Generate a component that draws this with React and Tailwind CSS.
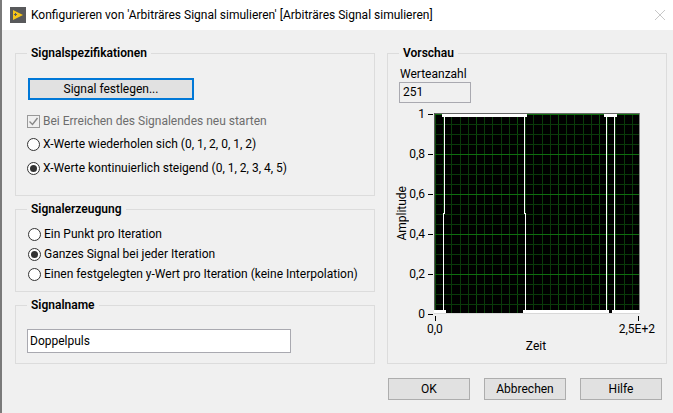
const xMinor = Array.from({ length: 25 }, (_, i) => i);
const yMinor = Array.from({ length: 20 }, (_, i) => i);

function Group({ title, className, children }) {
    return (
        <fieldset className={`border border-[#dcdcdc] px-[11px] ${className}`}>
            <legend className="px-1 text-[12px] leading-[16px] font-semibold text-black">{title}</legend>
            {children}
        </fieldset>
    );
}

function Radio({ label, checked }) {
    return (
        <div className="flex items-center gap-[3px] h-[20px] text-[12px] text-black">
            <span className="flex items-center justify-center w-[13px] h-[13px] rounded-full border border-[#333] bg-white shrink-0">
                {checked && <span className="w-[7px] h-[7px] rounded-full bg-[#333]"></span>}
            </span>
            <span className="whitespace-nowrap">{label}</span>
        </div>
    );
}

function DialogButton({ children }) {
    return (
        <button className="w-[82px] h-[22px] bg-[#e1e1e1] border border-[#adadad] text-[12px] text-black">
            {children}
        </button>
    );
}

function Plot() {
    return (
        <svg width="206" height="201" viewBox="0 0 206 201" className="block shrink-0">
            <rect x="0" y="0" width="206" height="201" fill="#000" />
            {xMinor.map((i) => (
                <rect key={i} x={Math.round(i * 8.2) + 1} y="0" width="1" height="201" fill={i % 5 === 0 ? '#0b4a0b' : '#0a3a0a'} />
            ))}
            {yMinor.map((i) => (
                <rect key={i} x="0" y={i * 10 + 1} width="206" height="1" fill={i % 4 === 0 ? '#0f6e0f' : '#0a3a0a'} />
            ))}
            <rect x="0" y="0" width="206" height="1" fill="#666" />
            <rect x="0" y="0" width="1" height="201" fill="#555" />
            <rect x="205" y="0" width="1" height="201" fill="#888" />
            {/* first pulse */}
            <rect x="8" y="1" width="85" height="3" fill="#fff" />
            <rect x="10" y="1" width="1" height="100" fill="#fff" />
            <rect x="90" y="1" width="1" height="100" fill="#fff" />
            <rect x="9" y="100" width="1" height="100" fill="#fff" />
            <rect x="91" y="100" width="1" height="100" fill="#fff" />
            {/* second pulse */}
            <rect x="170" y="1" width="13" height="3" fill="#fff" />
            <rect x="172" y="1" width="1" height="198" fill="#fff" />
            <rect x="180" y="1" width="1" height="198" fill="#fff" />
            {/* low parts */}
            <rect x="0" y="197" width="12" height="3" fill="#fff" />
            <rect x="89" y="197" width="86" height="3" fill="#fff" />
            <rect x="178" y="197" width="28" height="3" fill="#fff" />
            <rect x="0" y="200" width="206" height="1" fill="#d8d8d8" />
        </svg>
    );
}

function YTick({ label }) {
    return (
        <div className="flex items-center justify-end gap-[3px] h-0 text-[12px] text-black">
            <span>{label}</span>
            <span className="w-[5px] h-px bg-black"></span>
        </div>
    );
}

export default function App() {
    return (
        <div className="w-[673px] h-[413px] bg-[#f0f0f0] border-l-2 border-[#7a7a7a] overflow-hidden font-['Roboto',sans-serif]">
            {/* title bar */}
            <div className="flex items-center h-[30px] bg-white pl-[8px] pr-[8px]">
                <svg width="16" height="16" viewBox="0 0 16 16" className="shrink-0">
                    <rect width="16" height="16" fill="#58595b" />
                    <path d="M3 3 L13 8 L3 13 Z" fill="#f5c518" />
                    <rect x="4" y="7" width="3" height="1" fill="#58595b" />
                    <rect x="5" y="6" width="1" height="3" fill="#58595b" />
                </svg>
                <span className="ml-[5px] text-[12px] text-black whitespace-nowrap">
                    Konfigurieren von 'Arbiträres Signal simulieren' [Arbiträres Signal simulieren]
                </span>
                <svg width="10" height="10" viewBox="0 0 10 10" className="ml-auto">
                    <path d="M0 0 L10 10 M10 0 L0 10" stroke="#c8c8c8" fill="none" />
                </svg>
            </div>

            <div className="flex gap-[12px] pl-[13px] pt-[15px]">
                {/* left column */}
                <div className="flex flex-col w-[360px]">
                    <Group title="Signalspezifikationen" className="h-[151px]">
                        <button className="block mt-[17px] ml-[1px] w-[166px] h-[22px] bg-[#e1e1e1] border-2 border-[#0078d7] text-[12px] text-black">
                            Signal festlegen...
                        </button>
                        <div className="flex items-center gap-[3px] mt-[11px] h-[20px] text-[12px] text-[#6d6d6d]">
                            <span className="flex items-center justify-center w-[13px] h-[13px] border border-[#999] shrink-0">
                                <svg width="11" height="11" viewBox="0 0 11 11">
                                    <path d="M1.5 5.5 L4.5 8.5 L9.5 2" stroke="#888" strokeWidth="1.4" fill="none" />
                                </svg>
                            </span>
                            <span className="whitespace-nowrap">Bei Erreichen des Signalendes neu starten</span>
                        </div>
                        <div className="mt-[3px]">
                            <Radio label="X-Werte wiederholen sich (0, 1, 2, 0, 1, 2)" />
                        </div>
                        <div className="mt-[4px]">
                            <Radio label="X-Werte kontinuierlich steigend (0, 1, 2, 3, 4, 5)" checked />
                        </div>
                    </Group>

                    <Group title="Signalerzeugung" className="h-[91px] mt-[5px]">
                        <div className="mt-[7px] ml-[1px]">
                            <Radio label="Ein Punkt pro Iteration" />
                            <Radio label="Ganzes Signal bei jeder Iteration" checked />
                            <Radio label="Einen festgelegten y-Wert pro Iteration (keine Interpolation)" />
                        </div>
                    </Group>

                    <Group title="Signalname" className="h-[67px] mt-[5px]">
                        <input
                            readOnly
                            value="Doppelpuls"
                            className="block mt-[16px] w-[264px] h-[24px] bg-white border border-[#a9a9b0] px-[2px] text-[12px] text-black"
                        />
                    </Group>
                </div>

                {/* right column */}
                <div className="flex flex-col w-[276px]">
                    <Group title="Vorschau" className="h-[319px]">
                        <div className="text-[12px] leading-[16px] text-black mt-[5px] ml-[1px]">Werteanzahl</div>
                        <div className="w-[72px] h-[21px] border border-[#a9a9b0] px-[3px] text-[12px] leading-[19px] text-black">251</div>
                        <div className="flex mt-[10px]">
                            <div className="relative w-[35px] h-[201px] shrink-0 pr-px">
                                <div className="absolute -left-[4px] top-0 h-full flex items-center justify-center">
                                    <span className="[writing-mode:vertical-rl] rotate-180 text-[12px] leading-[14px] text-black">Amplitude</span>
                                </div>
                                <div className="flex flex-col items-end pt-[1px]">
                                    <div className="h-[40px]"><YTick label="1" /></div>
                                    <div className="h-[40px]"><YTick label="0,8" /></div>
                                    <div className="h-[40px]"><YTick label="0,6" /></div>
                                    <div className="h-[40px]"><YTick label="0,4" /></div>
                                    <div className="h-[40px]"><YTick label="0,2" /></div>
                                    <div className="h-0"><YTick label="0" /></div>
                                </div>
                            </div>
                            <Plot />
                        </div>
                        <div className="flex justify-between ml-[36px] w-[204px] mt-[2px] h-[5px]">
                            <span className="w-px h-[5px] bg-black"></span>
                            <span className="w-px h-[5px] bg-black"></span>
                        </div>
                        <div className="flex justify-between ml-[28px] w-[228px] text-[12px] leading-[14px] text-black mt-px">
                            <span>0,0</span>
                            <span>2,5E+2</span>
                        </div>
                        <div className="text-center text-[12px] leading-[16px] text-black ml-[35px] w-[204px] mt-[2px]">Zeit</div>
                    </Group>
                    <div className="flex gap-[14px] mt-[14px] pl-[1px]">
                        <DialogButton>OK</DialogButton>
                        <DialogButton>Abbrechen</DialogButton>
                        <DialogButton>Hilfe</DialogButton>
                    </div>
                </div>
            </div>
        </div>
    );
}
